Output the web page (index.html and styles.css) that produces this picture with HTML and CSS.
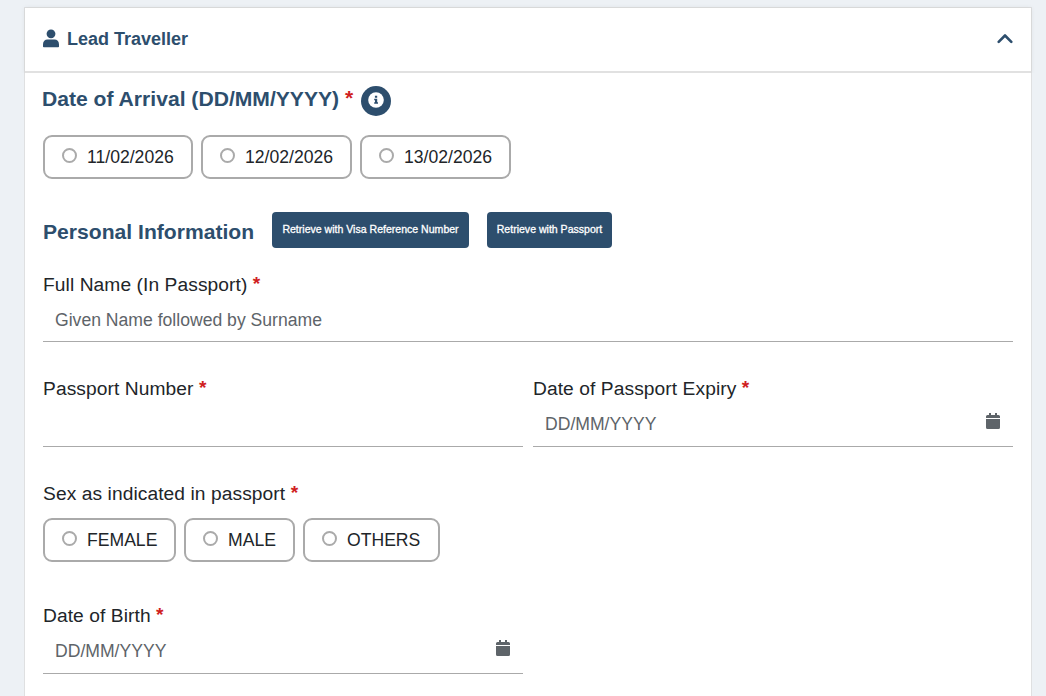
FILE: index.html
```
<!DOCTYPE html>
<html lang="en">
<head>
<meta charset="utf-8">
<title>Lead Traveller</title>
<link rel="stylesheet" href="styles.css">
</head>
<body>
<main class="card">
  <header class="card-header">
    <svg class="person" viewBox="0 0 16 19"><circle cx="8" cy="4.800" r="4.400"/><path d="M0 17.500v-2.200C0 12.500 2 10.600 4.500 10.600h7c2.500 0 4.500 1.900 4.500 4.700v2.200q0 .8-.8.8H.8Q0 18.300 0 17.500Z"/></svg>
    <span class="card-title">Lead Traveller</span>
    <svg class="chevron" viewBox="0 0 16 10"><path d="M1.700 7.800 8 1.500l6.300 6.300"/></svg>
  </header>
  <form class="card-body">
    <div class="arrival">
      <h2 class="heading">Date of Arrival (DD/MM/YYYY) <span class="required">*</span></h2>
      <span class="info"><svg class="info-icon" viewBox="0 0 16 16"><circle cx="8" cy="8" r="7.800" fill="#fff"/><path d="M6.900 3.700h2.300v2H6.900ZM6.200 6.700h3v3.600h.8v1.500H6.200v-1.500h.8V8.200h-.8Z" fill="#2d4e6d"/></svg></span>
    </div>
    <div class="options dates">
      <label class="option"><span class="radio"></span>11/02/2026</label>
      <label class="option"><span class="radio"></span>12/02/2026</label>
      <label class="option"><span class="radio"></span>13/02/2026</label>
    </div>
    <div class="personal">
      <h2 class="heading">Personal Information</h2>
      <button type="button" class="retrieve visa">Retrieve with Visa Reference Number</button>
      <button type="button" class="retrieve passport">Retrieve with Passport</button>
    </div>
    <div class="field name">
      <div class="label">Full Name (In Passport) <span class="required">*</span></div>
      <div class="control"><span>Given Name followed by Surname</span></div>
    </div>
    <div class="row">
      <div class="field">
        <div class="label">Passport Number <span class="required">*</span></div>
        <div class="control"></div>
      </div>
      <div class="field">
        <div class="label">Date of Passport Expiry <span class="required">*</span></div>
        <div class="control"><span>DD/MM/YYYY</span><svg class="calendar" viewBox="0 0 14 16"><path d="M3 0h2v2h4V0h2v2h1.500Q14 2 14 3.500V5H0V3.500Q0 2 1.500 2H3ZM0 6h14v8.500q0 1.500-1.500 1.500h-11Q0 16 0 14.500Z"/></svg></div>
      </div>
    </div>
    <div class="sex">
      <div class="label">Sex as indicated in passport <span class="required">*</span></div>
      <div class="options">
        <label class="option female"><span class="radio"></span>FEMALE</label>
        <label class="option male"><span class="radio"></span>MALE</label>
        <label class="option others"><span class="radio"></span>OTHERS</label>
      </div>
    </div>
    <div class="row birth">
      <div class="field">
        <div class="label">Date of Birth <span class="required">*</span></div>
        <div class="control"><span>DD/MM/YYYY</span><svg class="calendar" viewBox="0 0 14 16"><path d="M3 0h2v2h4V0h2v2h1.500Q14 2 14 3.500V5H0V3.500Q0 2 1.500 2H3ZM0 6h14v8.500q0 1.500-1.500 1.500h-11Q0 16 0 14.500Z"/></svg></div>
      </div>
    </div>
  </form>
</main>
</body>
</html>
```
FILE: styles.css
```
* { box-sizing: border-box; }
body {
  margin: 0;
  height: 696px;
  overflow: hidden;
  padding: 7px 14px 0 24px;
  background: #edf1f5;
  color: #212529;
  font-family: "Liberation Sans", Arial, sans-serif;
}
.card {
  height: 700px;
  background: #fff;
  border: 1px solid #dfe0e1;
  border-bottom: 0;
}
.card-header {
  display: flex;
  align-items: center;
  height: 65px;
  padding: 0 18px 2px 18px;
  border-bottom: 2px solid #e1e1e1;
  box-shadow: 0 0 5px rgba(0, 0, 0, .08);
  clip-path: inset(-5px -5px 0 -5px);
}
.person { width: 16px; height: 19px; fill: #2d4e6d; }
.card-title { margin-left: 8px; padding-top: 2px; font-size: 18px; font-weight: bold; color: #2d4e6d; }
.chevron { width: 16px; height: 10px; margin-left: auto; fill: none; stroke: #2d4e6d; stroke-width: 2.6; stroke-linecap: round; stroke-linejoin: round; }
.card-body { padding: 0 18px; }
.heading { margin: 0; font-size: 21.120px; line-height: 24px; color: #2d4e6d; white-space: nowrap; }
.required { color: #d01f1f; font-weight: bold; line-height: 1; vertical-align: 1px; }
.arrival { display: flex; height: 44px; padding-top: 13px; margin-left: -1px; }
.arrival .heading { padding-top: 1px; }
.info { display: flex; align-items: center; justify-content: center; width: 30px; height: 30px; margin-left: 8px; border-radius: 50%; background: #2d4e6d; }
.info-icon { width: 16px; height: 16px; margin-bottom: 2px; }
.options { display: flex; gap: 8px; height: 44px; }
.dates { margin-top: 18px; }
.option {
  display: flex;
  align-items: center;
  width: 151px;
  padding-left: 17px;
  border: 2px solid #aaa;
  border-radius: 9px;
  font-size: 17.600px;
  white-space: nowrap;
}
.dates .option:first-child { width: 150px; }
.radio { width: 15px; height: 15px; margin: 0 10px 3px 0; border: 2px solid #aaa; border-radius: 50%; }
.female { width: 133px; }
.male { width: 111px; }
.others { width: 137px; }
.personal { display: flex; align-items: center; height: 36px; margin-top: 33px; }
.personal .heading { width: 229px; padding-top: 3px; }
.retrieve {
  height: 36px;
  padding: 0 0 2px;
  border: 0;
  border-radius: 4px;
  background: #2d4e6d;
  color: #fff;
  font: 10.560px "Liberation Sans", Arial, sans-serif;
  -webkit-text-stroke: .3px #fff;
}
.visa { width: 197px; }
.passport { width: 125px; margin-left: 18px; }
.label { font-size: 19.200px; line-height: 24px; letter-spacing: .08px; white-space: nowrap; }
.name { margin-top: 25px; }
.control {
  display: flex;
  align-items: center;
  justify-content: space-between;
  height: 46px;
  padding: 1px 13px 0 12px;
  border-bottom: 1px solid #aaa;
  color: #5e6469;
  font-size: 17.600px;
}
.name .control { height: 45px; padding-top: 3px; }
.calendar { width: 14px; height: 16px; margin-bottom: 7px; fill: #5e6469; }
.row { display: grid; grid-template-columns: 1fr 1fr; gap: 10px; margin-top: 35px; }
.sex { margin-top: 35px; }
.sex .options { margin-top: 12px; }
.birth { margin-top: 42px; }
```
